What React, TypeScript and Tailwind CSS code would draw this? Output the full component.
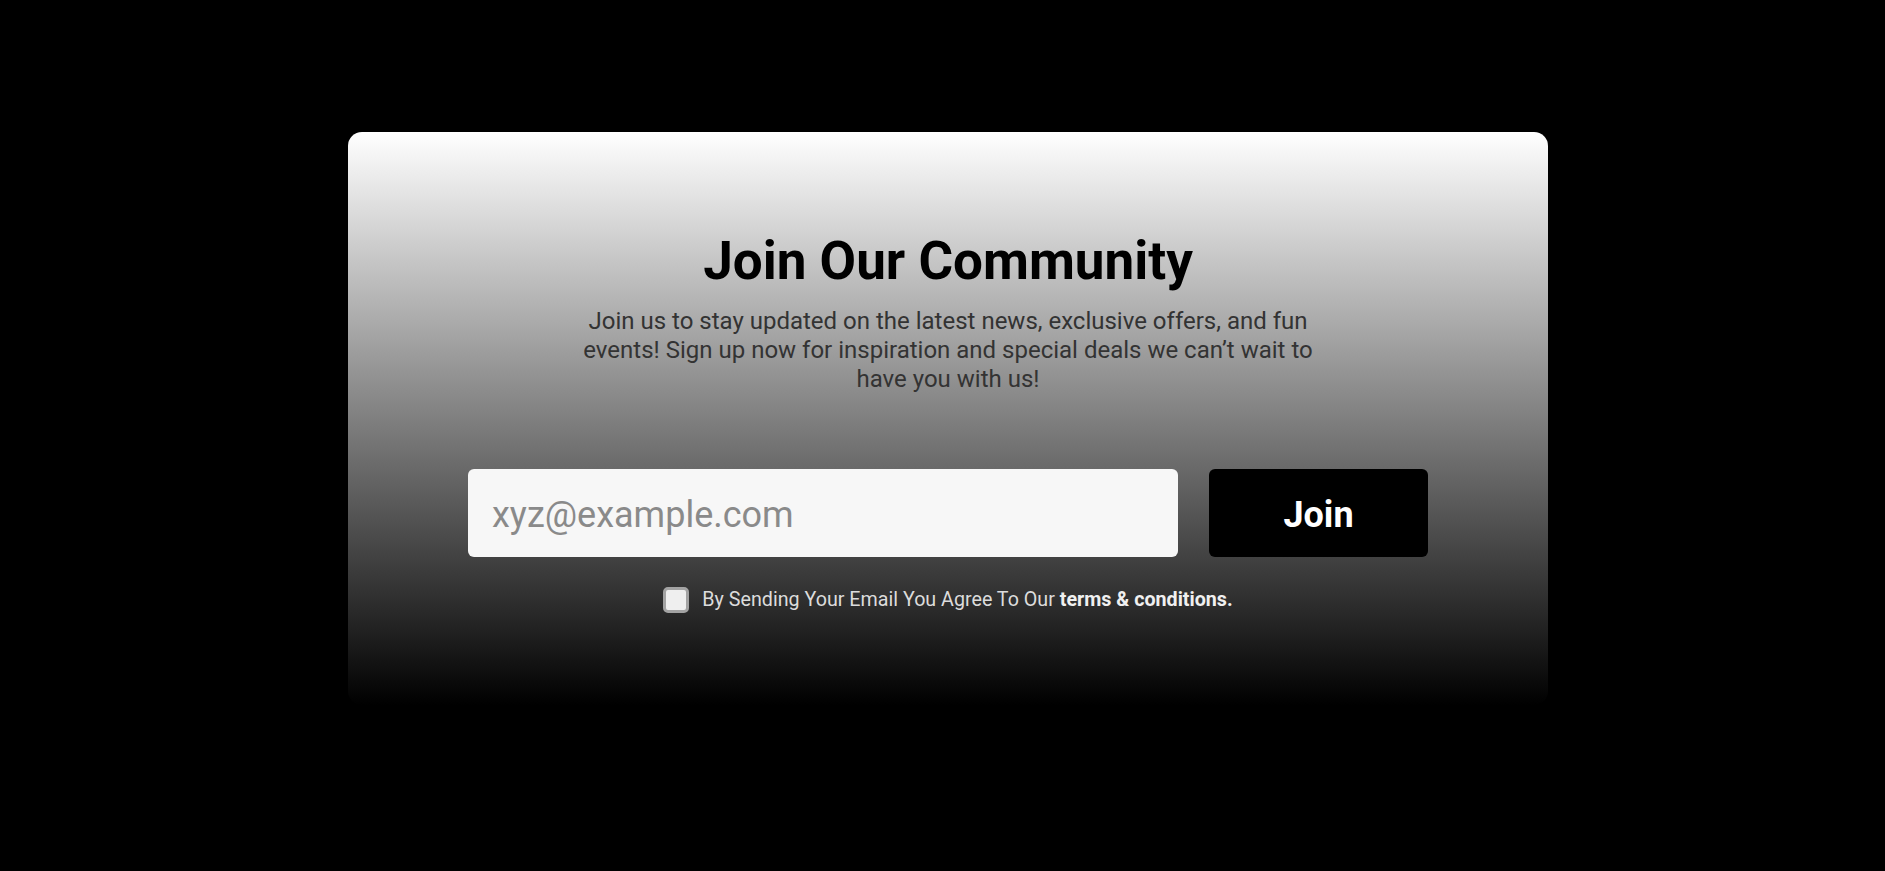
export default function App() {
  return (
    <div className="min-h-screen bg-black pt-[132px] pl-[11px] flex justify-center font-['Roboto',sans-serif]">
      <div className="w-[1200px] h-[573px] rounded-[14px] bg-[linear-gradient(to_bottom,#ffffff,#000000)] flex flex-col items-center pt-[98px]">
        <h1 className="text-[53px] leading-[62px] font-bold text-black">Join Our Community</h1>
        <p className="mt-[15px] max-w-[750px] text-center text-[24px] leading-[29px] text-[#333333]">
          Join us to stay updated on the latest news, exclusive offers, and fun events! Sign up now for inspiration and special deals we can’t wait to have you with us!
        </p>

        <form className="mt-[75px] flex gap-[31px]" onSubmit={(e) => e.preventDefault()}>
          <input
            type="email"
            placeholder="xyz@example.com"
            className="w-[710px] h-[88px] rounded-[6px] bg-[#f7f7f7] px-6 pt-[3px] text-[36px] text-black placeholder:text-[#8a8a8a] outline-none"
          />
          <button className="w-[219px] h-[88px] rounded-[6px] bg-black text-white text-[36px] font-bold pt-[3px]">
            Join
          </button>
        </form>

        <label className="mt-[28px] flex items-center gap-[13px]">
          <input
            type="checkbox"
            className="appearance-none w-[26px] h-[26px] rounded-[5px] border-[3px] border-[#a3a3a3] bg-[#efefef]"
          />
          <span className="text-[19.7px] text-[#dcdcdc]">
            By Sending Your Email You Agree To Our{" "}
            <span className="font-bold text-[#f0f0f0]">terms &amp; conditions.</span>
          </span>
        </label>
      </div>
    </div>
  );
}
